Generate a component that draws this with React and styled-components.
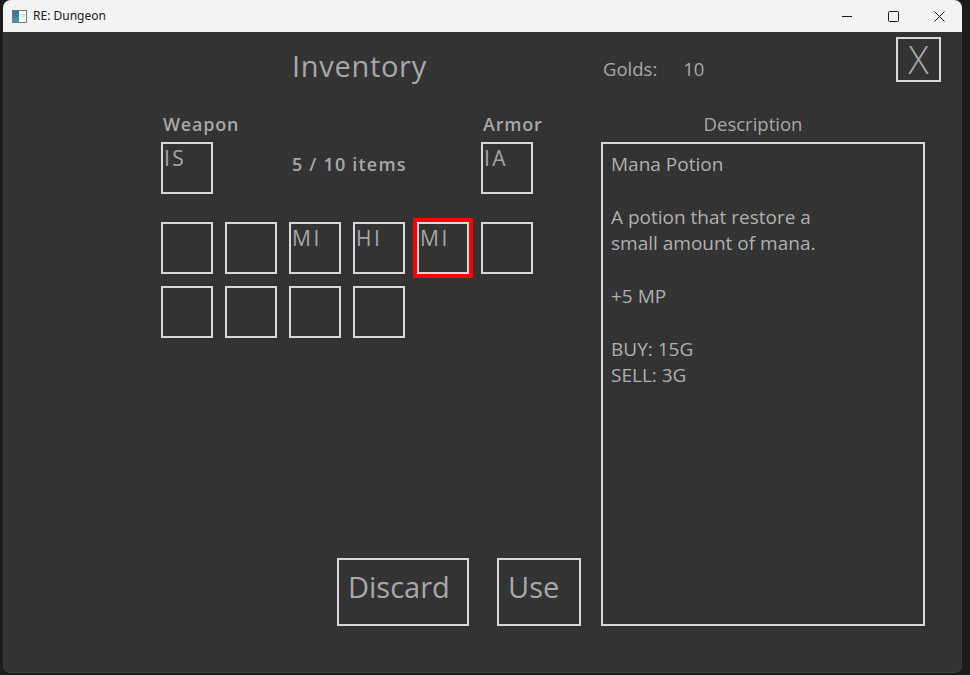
import React from "react";
import styled, { createGlobalStyle } from "styled-components";

const Global = createGlobalStyle`
  html, body { margin: 0; padding: 0; background: #1c1c1c; }
  body { width: 970px; height: 675px; overflow: hidden; font-family: "Open Sans", "Noto Sans", sans-serif; }
  * { box-sizing: border-box; }
`;

const Desktop = styled.div`
  width: 970px;
  height: 675px;
  padding-left: 3px;
  background: #1c1c1c;
`;

const Window = styled.div`
  width: 959px;
  height: 673px;
  display: flex;
  flex-direction: column;
  background: #333333;
  border-radius: 8px;
  overflow: hidden;
  box-shadow: inset 1px 0 0 #3c3c3c, inset -1px 0 0 #3c3c3c, inset 0 -1px 0 #3c3c3c;
`;

const TitleBar = styled.div`
  height: 32px;
  flex: none;
  display: flex;
  align-items: center;
  background: #f3f3f3;
  padding-left: 9px;
  font-family: "Noto Sans", "Open Sans", sans-serif;
  font-size: 12px;
  color: #1a1a1a;
`;

const AppTitle = styled.span`
  margin-left: 6px;
  margin-top: -1px;
`;

const Controls = styled.div`
  margin-left: auto;
  display: flex;
  height: 100%;
`;

const ControlButton = styled.div`
  width: 46px;
  height: 100%;
  display: flex;
  align-items: center;
  justify-content: center;
`;

const Body = styled.div`
  flex: 1;
  display: flex;
  flex-direction: column;
  padding: 5px 21px 47px 158px;
  color: #a9a9a9;
`;

const Header = styled.div`
  height: 45px;
  display: flex;
  align-items: center;
`;

const TitleCell = styled.div`
  width: 442px;
  padding-left: 131px;
  font-size: 29px;
  font-weight: 500;
  letter-spacing: 0.7px;
  color: #a8a8a8;
  margin-top: 11px;
`;

const Golds = styled.div`
  display: flex;
  gap: 26px;
  font-size: 18.5px;
  color: #a8a8a8;
  margin-top: 18px;
`;

const CloseButton = styled.div`
  margin-left: auto;
  width: 45px;
  height: 45px;
  border: 2px solid #d9d9d9;
  display: flex;
  align-items: center;
  justify-content: center;
  font-size: 38px;
  font-weight: 300;
  line-height: 1;
  color: #a8a8a8;
  padding-bottom: 2px;
`;

const Main = styled.div`
  flex: 1;
  display: flex;
  gap: 20px;
  margin-top: 30px;
`;

const LeftPanel = styled.div`
  width: 420px;
  display: flex;
  flex-direction: column;
`;

const SlotGrid = styled.div`
  display: grid;
  grid-template-columns: repeat(6, 52px);
  column-gap: 12px;
  row-gap: 12px;
`;

const EquipGrid = styled(SlotGrid)`
  grid-template-rows: 30px 52px;
  row-gap: 0;
`;

const SlotLabel = styled.div`
  grid-column: ${(p) => p.$col};
  grid-row: 1;
  white-space: nowrap;
  font-size: 18px;
  font-weight: 600;
  letter-spacing: 0.8px;
  padding-left: 2px;
  line-height: 24px;
  color: #a8a8a8;
`;

const Count = styled.div`
  grid-column: 3 / span 3;
  grid-row: 2;
  align-self: center;
  padding-left: 3px;
  margin-top: -8px;
  font-size: 18px;
  font-weight: 600;
  letter-spacing: 1.2px;
  color: #a8a8a8;
`;

const Slot = styled.div`
  grid-column: ${(p) => p.$col || "auto"};
  grid-row: ${(p) => p.$row || "auto"};
  width: 52px;
  height: 52px;
  border: 2px solid #d9d9d9;
  padding: 1px 0 0 1px;
  font-size: 21px;
  letter-spacing: 2.5px;
  line-height: 26px;
  color: #a6a6a6;
  box-shadow: ${(p) => (p.$selected ? "0 0 0 3px #ff0000" : "none")};
  ${(p) => p.$selected && "outline: 1px solid #ff0000; outline-offset: 3px;"}
`;

const InventoryGrid = styled(SlotGrid)`
  margin-top: 28px;
`;

const Actions = styled.div`
  margin-top: auto;
  display: flex;
  justify-content: flex-end;
  gap: 28px;
`;

const ActionButton = styled.div`
  width: ${(p) => p.$w}px;
  height: 68px;
  border: 2px solid #d9d9d9;
  padding: 7px 0 0 9px;
  font-size: 29px;
  line-height: 40px;
  color: #a8a8a8;
`;

const DescPanel = styled.div`
  width: 324px;
  display: flex;
  flex-direction: column;
`;

const DescLabel = styled.div`
  height: 30px;
  text-align: center;
  padding-right: 20px;
  font-size: 18.5px;
  line-height: 24px;
  color: #a8a8a8;
`;

const DescBox = styled.div`
  flex: 1;
  border: 2px solid #d9d9d9;
  padding: 7px 8px;
  font-size: 19px;
  line-height: 26.4px;
  color: #b0b0b0;
  white-space: pre-line;
`;

const AppIcon = () => (
  <svg width="15" height="13" viewBox="0 0 15 13">
    <defs>
      <linearGradient id="g" x1="0" y1="0" x2="0" y2="1">
        <stop offset="0" stopColor="#2c6fb0" />
        <stop offset="1" stopColor="#3fa58a" />
      </linearGradient>
    </defs>
    <rect x="0.5" y="0.5" width="14" height="12" fill="#ffffff" stroke="#7a7a7a" />
    <rect x="1" y="1" width="6" height="11" fill="url(#g)" />
    <rect x="9" y="4" width="4" height="3" fill="#cfe3e0" />
  </svg>
);

const description = `Mana Potion

A potion that restore a
small amount of mana.

+5 MP

BUY: 15G
SELL: 3G`;

const inventory = ["", "", "MI", "HI", "MI", "", "", "", "", ""];

export default function App() {
  return (
    <>
      <Global />
      <Desktop>
        <Window>
          <TitleBar>
            <AppIcon />
            <AppTitle>RE: Dungeon</AppTitle>
            <Controls>
              <ControlButton>
                <svg width="10" height="10" viewBox="0 0 10 10">
                  <path d="M0 5.5h10" stroke="#1a1a1a" strokeWidth="1" />
                </svg>
              </ControlButton>
              <ControlButton>
                <svg width="11" height="11" viewBox="0 0 11 11">
                  <rect x="0.5" y="0.5" width="10" height="10" rx="1" fill="none" stroke="#1a1a1a" strokeWidth="1" />
                </svg>
              </ControlButton>
              <ControlButton>
                <svg width="11" height="11" viewBox="0 0 11 11">
                  <path d="M0.5 0.5l10 10M10.5 0.5l-10 10" stroke="#1a1a1a" strokeWidth="1" />
                </svg>
              </ControlButton>
            </Controls>
          </TitleBar>
          <Body>
            <Header>
              <TitleCell>Inventory</TitleCell>
              <Golds>
                <span>Golds:</span>
                <span>10</span>
              </Golds>
              <CloseButton>X</CloseButton>
            </Header>
            <Main>
              <LeftPanel>
                <EquipGrid>
                  <SlotLabel $col={1}>Weapon</SlotLabel>
                  <SlotLabel $col={6}>Armor</SlotLabel>
                  <Slot $col={1} $row={2}>IS</Slot>
                  <Count>5 / 10 items</Count>
                  <Slot $col={6} $row={2}>IA</Slot>
                </EquipGrid>
                <InventoryGrid>
                  {inventory.map((item, i) => (
                    <Slot key={i} $selected={i === 4}>
                      {item}
                    </Slot>
                  ))}
                </InventoryGrid>
                <Actions>
                  <ActionButton $w={132}>Discard</ActionButton>
                  <ActionButton $w={84}>Use</ActionButton>
                </Actions>
              </LeftPanel>
              <DescPanel>
                <DescLabel>Description</DescLabel>
                <DescBox>{description}</DescBox>
              </DescPanel>
            </Main>
          </Body>
        </Window>
      </Desktop>
    </>
  );
}
